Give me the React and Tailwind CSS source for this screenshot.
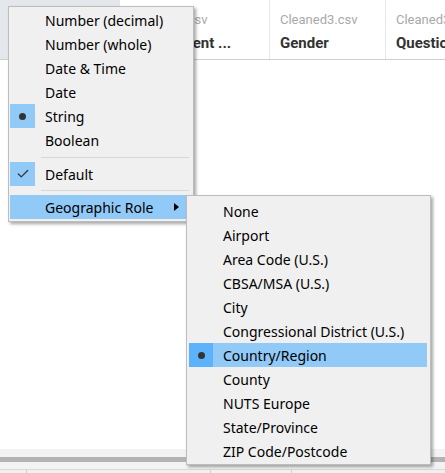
import { Check } from 'lucide-react';

const MENU_FONT = { fontFamily: '"Noto Sans", "Liberation Sans", sans-serif' };

const GEO_ROLES = [
  'None',
  'Airport',
  'Area Code (U.S.)',
  'CBSA/MSA (U.S.)',
  'City',
  'Congressional District (U.S.)',
  'Country/Region',
  'County',
  'NUTS Europe',
  'State/Province',
  'ZIP Code/Postcode',
];

function Bullet() {
  return <span className="block w-[7px] h-[7px] rounded-full bg-[#333]" />;
}

function MenuItem({ label, mark }) {
  return (
    <div className="flex h-6 items-center">
      <div
        className={`w-[25px] h-6 flex items-center justify-center ${
          mark ? 'bg-[#91c9f7]' : ''
        }`}
      >
        {mark === 'dot' && <Bullet />}
        {mark === 'check' && <Check size={14} strokeWidth={2.2} className="text-[#333]" />}
      </div>
      <span className="ml-[10px] mt-[2px] text-[14px] text-black leading-none">{label}</span>
    </div>
  );
}

function Separator({ h }) {
  return (
    <div className={`${h} flex items-center pl-[31px] pr-[3px]`}>
      <div className="h-px w-full bg-[#d7d7d7]" />
    </div>
  );
}

function TypeMenu() {
  return (
    <div
      className="absolute left-[8px] top-[6px] w-[186px] bg-[#f0f0f0] border border-[#bdbdbd] shadow-[2px_2px_3px_rgba(0,0,0,0.35)] pt-[1px] pb-[2px] px-[1px]"
      style={MENU_FONT}
    >
      <MenuItem label="Number (decimal)" />
      <MenuItem label="Number (whole)" />
      <MenuItem label="Date & Time" />
      <MenuItem label="Date" />
      <MenuItem label="String" mark="dot" />
      <MenuItem label="Boolean" />
      <Separator h="h-[10px]" />
      <MenuItem label="Default" mark="check" />
      <Separator h="h-[9px]" />
      <div className="flex h-6 items-center bg-[#91c9f7] mr-[3px]">
        <span className="ml-[35px] mt-[2px] text-[14px] text-black leading-none">Geographic Role</span>
        <svg width="5" height="8" viewBox="0 0 5 8" className="ml-auto mr-[10px]">
          <path d="M0 0 L5 4 L0 8 Z" fill="#000" />
        </svg>
      </div>
    </div>
  );
}

function GeoMenu() {
  return (
    <div
      className="absolute left-[186px] top-[195px] w-[245px] bg-[#f0f0f0] border border-[#bdbdbd] shadow-[2px_2px_3px_rgba(0,0,0,0.35)] pt-[3px] pb-px pl-[2px] pr-[3px]"
      style={MENU_FONT}
    >
      {GEO_ROLES.map((role) => {
        const active = role === 'Country/Region';
        return (
          <div key={role} className={`flex h-6 items-center ${active ? 'bg-[#91c9f7]' : ''}`}>
            <div
              className={`w-6 h-6 flex items-center justify-center ${
                active ? 'bg-[#5cb2fb]' : ''
              }`}
            >
              {active && <Bullet />}
            </div>
            <span className="ml-[10px] mt-[2px] text-[14px] text-black leading-none">{role}</span>
          </div>
        );
      })}
    </div>
  );
}

function HeaderCell({ width, title, last }) {
  return (
    <div
      className={`h-full pl-[10px] pt-[12px] ${last ? 'flex-1' : 'border-r border-[#e6e6e6]'} overflow-hidden whitespace-nowrap`}
      style={{ width }}
    >
      <div className="text-[13px] text-[#a9a9a9] leading-4">Cleaned3.csv</div>
      <div className="text-[15px] font-bold text-[#333] leading-5 mt-[5px]">{title}</div>
    </div>
  );
}

export default function App() {
  return (
    <div
      className="relative w-[445px] h-[473px] bg-white overflow-hidden flex flex-col"
      style={{ fontFamily: 'Roboto, "Liberation Sans", sans-serif' }}
    >
      <div className="flex h-[60px] border-b border-[#cfcfcf] shrink-0">
        <div className="w-[120px] h-full bg-[#e4e8ec]" />
        <HeaderCell width={150} title="Employment ..." />
        <HeaderCell width={116} title="Gender" />
        <HeaderCell title="Question" last />
      </div>
      <div className="flex-1 bg-white" />
      <div className="h-[8px] bg-[#f3f3f3]" />
      <div className="h-[5px] bg-[#b4b4b4]" />
      <div className="h-[8px] bg-[#f3f3f3] border-b border-[#d9d9d9]" />
      <div className="h-[3px] flex bg-[#f0f0f0]">
        <div className="w-[27px] border-r border-[#d0d0d0]" />
        <div className="w-[184px] border-r border-[#d0d0d0]" />
        <div className="w-[81px] border-r border-[#d0d0d0]" />
      </div>

      <TypeMenu />
      <GeoMenu />
    </div>
  );
}
